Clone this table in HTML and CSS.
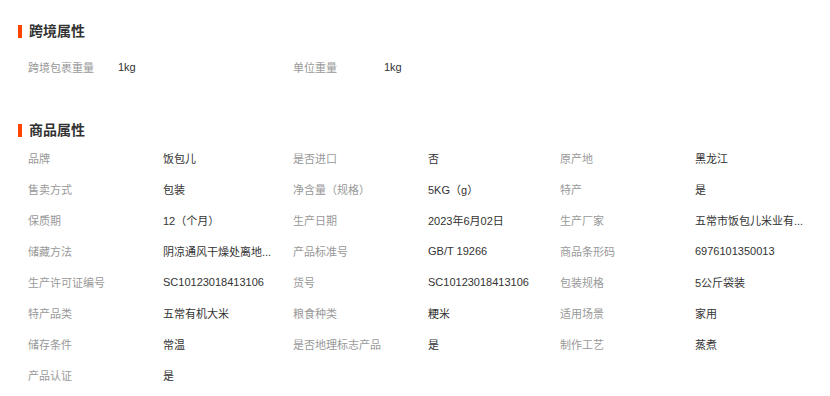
FILE: index.html
```html
<!DOCTYPE html>
<html lang="zh">
<head>
<meta charset="utf-8">
<link rel="stylesheet" href="styles.css">
</head>
<body>
<div class="page">
  <section class="sec sec-cross">
    <h2 class="sec-title">跨境属性</h2>
    <div class="grid grid-cross">
      <div class="lbl">跨境包裹重量</div><div class="val">1kg</div>
      <div class="lbl">单位重量</div><div class="val">1kg</div>
    </div>
  </section>
  <section class="sec sec-goods">
    <h2 class="sec-title">商品属性</h2>
    <div class="grid grid-goods">
      <div class="lbl">品牌</div><div class="val">饭包儿</div>
      <div class="lbl">是否进口</div><div class="val">否</div>
      <div class="lbl">原产地</div><div class="val">黑龙江</div>

      <div class="lbl">售卖方式</div><div class="val">包装</div>
      <div class="lbl">净含量（规格）</div><div class="val">5KG（g）</div>
      <div class="lbl">特产</div><div class="val">是</div>

      <div class="lbl">保质期</div><div class="val">12（个月）</div>
      <div class="lbl">生产日期</div><div class="val">2023年6月02日</div>
      <div class="lbl">生产厂家</div><div class="val" title="五常市饭包儿米业有限公司">五常市饭包儿米业有...</div>

      <div class="lbl">储藏方法</div><div class="val" title="阴凉通风干燥处离地存放">阴凉通风干燥处离地...</div>
      <div class="lbl">产品标准号</div><div class="val">GB/T 19266</div>
      <div class="lbl">商品条形码</div><div class="val">6976101350013</div>

      <div class="lbl">生产许可证编号</div><div class="val">SC10123018413106</div>
      <div class="lbl">货号</div><div class="val">SC10123018413106</div>
      <div class="lbl">包装规格</div><div class="val">5公斤袋装</div>

      <div class="lbl">特产品类</div><div class="val">五常有机大米</div>
      <div class="lbl">粮食种类</div><div class="val">粳米</div>
      <div class="lbl">适用场景</div><div class="val">家用</div>

      <div class="lbl">储存条件</div><div class="val">常温</div>
      <div class="lbl">是否地理标志产品</div><div class="val">是</div>
      <div class="lbl">制作工艺</div><div class="val">蒸煮</div>

      <div class="lbl">产品认证</div><div class="val">是</div>
    </div>
  </section>
</div>
</body>
</html>
```

FILE: styles.css
```css
* { box-sizing: border-box; }
html, body {
  margin: 0;
  padding: 0;
  background: #fff;
}
body {
  font-family: "Liberation Sans", "Noto Sans CJK SC", sans-serif;
  font-size: 11px;
  color: #333;
  width: 830px;
  height: 396px;
  overflow: hidden;
}
.page {
  padding: 21px 0 0 18px;
}
.sec-title {
  margin: 0;
  height: 20px;
  line-height: 20px;
  font-size: 14px;
  font-weight: bold;
  color: #333;
  display: flex;
  align-items: center;
  gap: 7px;
}
.sec-title::before {
  content: "";
  width: 4px;
  height: 13px;
  background: #ff4400;
}
.grid {
  display: grid;
  padding-left: 10px;
  grid-auto-rows: 31px;
  align-items: center;
}
.grid-cross {
  margin-top: 10px;
  grid-template-columns: 90px 175px 91px 1fr;
}
.sec-goods {
  margin-top: 38px;
}
.grid-goods {
  margin-top: 2px;
  grid-template-columns: 135px 130px 135px 132px 135px 1fr;
}
.lbl {
  color: #999;
  white-space: nowrap;
}
.val {
  color: #333;
  white-space: nowrap;
}
```
